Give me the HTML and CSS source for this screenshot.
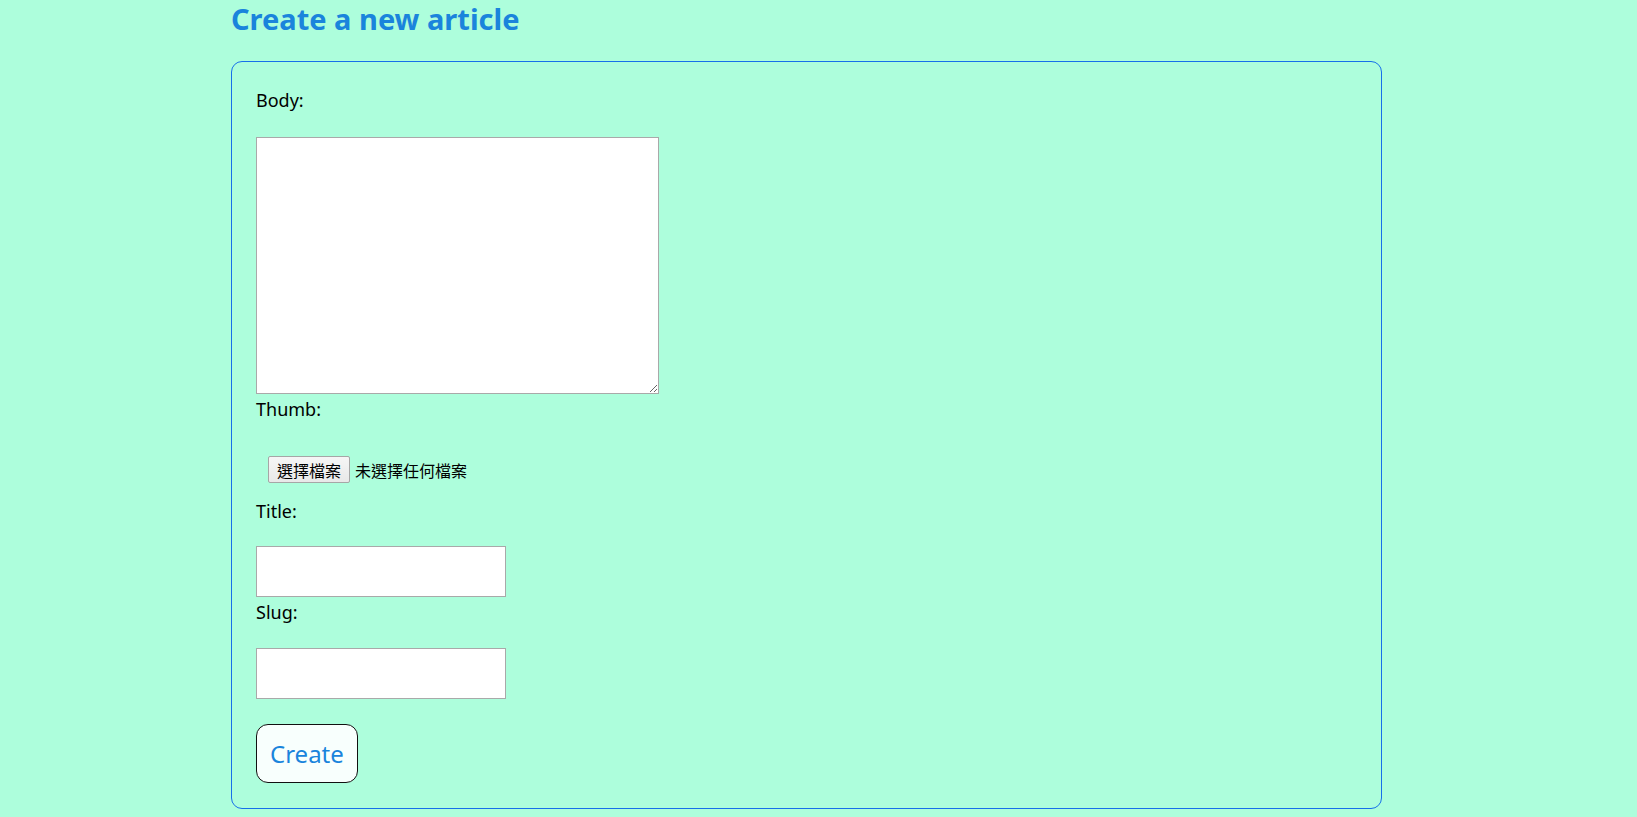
FILE: index.html
```html
<!DOCTYPE html>
<html lang="zh-Hant">
<head>
<meta charset="utf-8">
<title>Create a new article</title>
<link rel="stylesheet" href="styles.css">
</head>
<body>
<main class="page">
  <h1 class="page-title">Create a new article</h1>
  <form class="article-form">
    <label class="field-label" for="body">Body:</label>
    <textarea id="body" class="body-input"></textarea>
    <label class="field-label" for="thumb">Thumb:</label>
    <div class="file-field">
      <label class="file-btn">選擇檔案<input id="thumb" class="file-hidden" type="file"></label>
      <span class="file-status">未選擇任何檔案</span>
    </div>
    <label class="field-label" for="title">Title:</label>
    <input id="title" class="text-input" type="text">
    <label class="field-label" for="slug">Slug:</label>
    <input id="slug" class="text-input slug-input" type="text">
    <button class="create-btn" type="submit">Create</button>
  </form>
</main>
</body>
</html>
```
FILE: styles.css
```css
html, body {
  margin: 0;
  padding: 0;
}
body {
  background: #adfedc;
  font-family: "Noto Sans", "DejaVu Sans", sans-serif;
  font-size: 18px;
  line-height: 25px;
  color: #000;
}
.page {
  width: 1151px;
  margin-left: 231px;
}
.page-title {
  margin: 0 0 23px;
  font-size: 29px;
  line-height: 38px;
  font-weight: 700;
  color: #1a84dc;
}
.article-form {
  box-sizing: border-box;
  border: 1px solid #166fea;
  border-radius: 11px;
  padding: 23px 23px 24px 24px;
  display: flex;
  flex-direction: column;
  align-items: flex-start;
  height: 748px;
}
.field-label {
  display: block;
  height: 25px;
  line-height: 31px;
}
.body-input {
  box-sizing: border-box;
  margin: 27px 0 0;
  width: 403px;
  height: 257px;
  border: 1px solid #a9a9a9;
  background: #fff;
  padding: 2px;
  font: inherit;
  display: block;
}
.file-field {
  margin-top: 25px;
  padding: 12px 12px 13px;
  display: flex;
  align-items: center;
  gap: 5px;
  font-family: "Noto Sans CJK TC", "Noto Sans CJK SC", sans-serif;
  font-size: 16px;
  line-height: 20px;
}
.file-btn {
  box-sizing: border-box;
  height: 27px;
  padding: 0 8px;
  display: flex;
  align-items: center;
  background: linear-gradient(#f6f6f6, #e8e8e8);
  border: 1px solid #a6a6a6;
  border-radius: 2px;
  color: #000;
}
.file-hidden {
  display: none;
}
.file-status {
  color: #000;
}
.text-input {
  box-sizing: border-box;
  margin: 25px 0 0;
  width: 250px;
  height: 51px;
  padding: 12px;
  border: 1px solid #a9a9a9;
  background: #fff;
  font: inherit;
  display: block;
}
.slug-input {
  margin-top: 26px;
}
.create-btn {
  box-sizing: border-box;
  margin-top: 25px;
  height: 59px;
  padding: 0 13px;
  border: 1px solid #111;
  border-radius: 12px;
  background: #f8fffd;
  color: #1a84dc;
  font-family: "Noto Sans", "DejaVu Sans", sans-serif;
  font-size: 24px;
  line-height: 33px;
}
```
